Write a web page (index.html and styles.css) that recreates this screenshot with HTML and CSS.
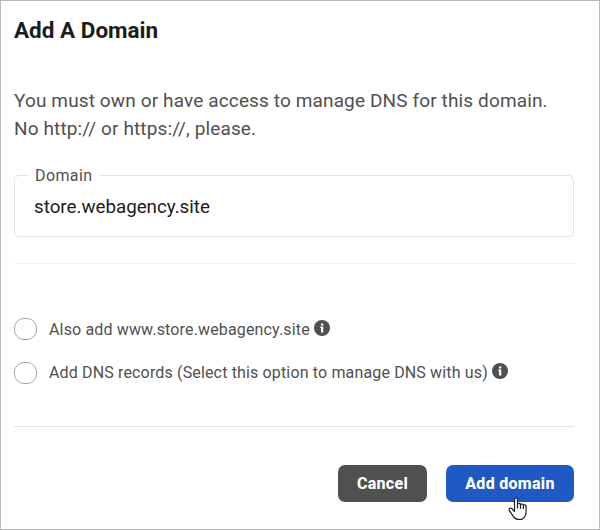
FILE: index.html
```html
<!DOCTYPE html>
<html lang="en">
<head>
<meta charset="utf-8">
<title>Add A Domain</title>
<link rel="stylesheet" href="styles.css">
</head>
<body>
<main class="dialog">
  <h1 class="title">Add A Domain</h1>
  <p class="intro">You must own or have access to manage DNS for this domain.<br>No http:// or https://, please.</p>
  <div class="field">
    <span class="field-label">Domain</span>
    <div class="field-value">store.webagency.site</div>
  </div>
  <div class="options">
    <div class="option option-www">
      <span class="check"></span>
      <span class="option-text">Also add www.store.webagency.site</span>
      <svg class="info" viewBox="0 0 16 16"><circle cx="8" cy="8" r="8"/><path d="M7 3.500h2.300v2H7zM6.300 6.500h3v6H7V8h-.7z"/></svg>
    </div>
    <div class="option option-dns">
      <span class="check"></span>
      <span class="option-text">Add DNS records (Select this option to manage DNS with us)</span>
      <svg class="info" viewBox="0 0 16 16"><circle cx="8" cy="8" r="8"/><path d="M7 3.500h2.300v2H7zM6.300 6.500h3v6H7V8h-.7z"/></svg>
    </div>
  </div>
  <div class="actions">
    <button class="btn btn-cancel" type="button">Cancel</button>
    <button class="btn btn-add" type="button">Add domain</button>
  </div>
  <svg class="cursor" viewBox="0 0 20 26"><path d="M7.500 16.500V4.300c0-2 3-2 3 0v5.200c.3-1.600 2.900-1.400 3 .2.500-1.200 2.700-.9 2.900.6.6-1 2.700-.5 2.700 1.300v5.400c0 3.400-1.900 7.500-6.700 7.500-3.900 0-5.500-1.700-6.900-4.400L2.300 15.300c-.9-2 1-2.900 2.700-1.700z"/><path d="M10.500 9v4.500M13.500 9.700v4M16.400 10.500v3.500"/></svg>
</main>
</body>
</html>
```
FILE: styles.css
```css
* { box-sizing: border-box; }
body {
  margin: 0;
  background: #fff;
  color: #505050;
  font-family: Roboto, "Liberation Sans", sans-serif;
}
.dialog {
  position: relative;
  width: 600px;
  height: 530px;
  padding: 13px 25px 0 13px;
  border: 1px solid #bababa;
}
.title {
  margin: 0;
  color: #1c1c1c;
  font-size: 22.5px;
  font-weight: 700;
  line-height: 32px;
}
.intro {
  margin: 41px 0 0;
  font-size: 19px;
  line-height: 28px;
  letter-spacing: 0.13px;
  white-space: nowrap;
}
.field {
  position: relative;
  height: 62px;
  margin-top: 32px;
  padding: 16px 19px;
  border: 1px solid #e3e3e3;
  border-radius: 5px;
}
.field-label {
  position: absolute;
  top: -10px;
  left: 14px;
  padding: 0 6px;
  background: #fff;
  font-size: 16px;
  line-height: 20px;
  letter-spacing: 0.4px;
}
.field-value {
  color: #1c1c1c;
  font-size: 18.75px;
  line-height: 30px;
}
.options {
  display: flex;
  flex-direction: column;
  gap: 22px;
  height: 164px;
  margin-top: 26px;
  padding-top: 54px;
  border-top: 1px solid #f0f0f0;
  border-bottom: 1px solid #e3e3e3;
}
.option {
  display: flex;
  align-items: flex-start;
  height: 22px;
  white-space: nowrap;
}
.check {
  flex: none;
  width: 23px;
  height: 22px;
  margin-right: 12px;
  border: 1px solid #a5a5a5;
  border-radius: 10px;
}
.option-text {
  font-size: 16px;
  line-height: 22px;
  letter-spacing: 0.15px;
}
.option-www .option-text { margin-top: 1px; }
.info {
  flex: none;
  width: 16px;
  height: 16px;
  margin: 1px 0 0 4px;
  fill: #505050;
}
.option-www .info { margin-top: 2px; }
.info path { fill: #fff; }
.actions {
  display: flex;
  justify-content: flex-end;
  gap: 19px;
  margin-top: 38px;
}
.btn {
  height: 37px;
  padding: 0;
  border: 0;
  border-radius: 7px;
  color: #fff;
  font: 800 16px/37px Roboto, "Liberation Sans", sans-serif;
  letter-spacing: 0.3px;
}
.btn-cancel { width: 89px; background: #505050; }
.btn-add { width: 128px; background: #1f5ac4; }
.cursor {
  position: absolute;
  top: 494px;
  left: 506px;
  width: 20px;
  height: 26px;
  fill: #fff;
  stroke: #1d1d2b;
  stroke-width: 1.2;
  stroke-linejoin: round;
}
```
